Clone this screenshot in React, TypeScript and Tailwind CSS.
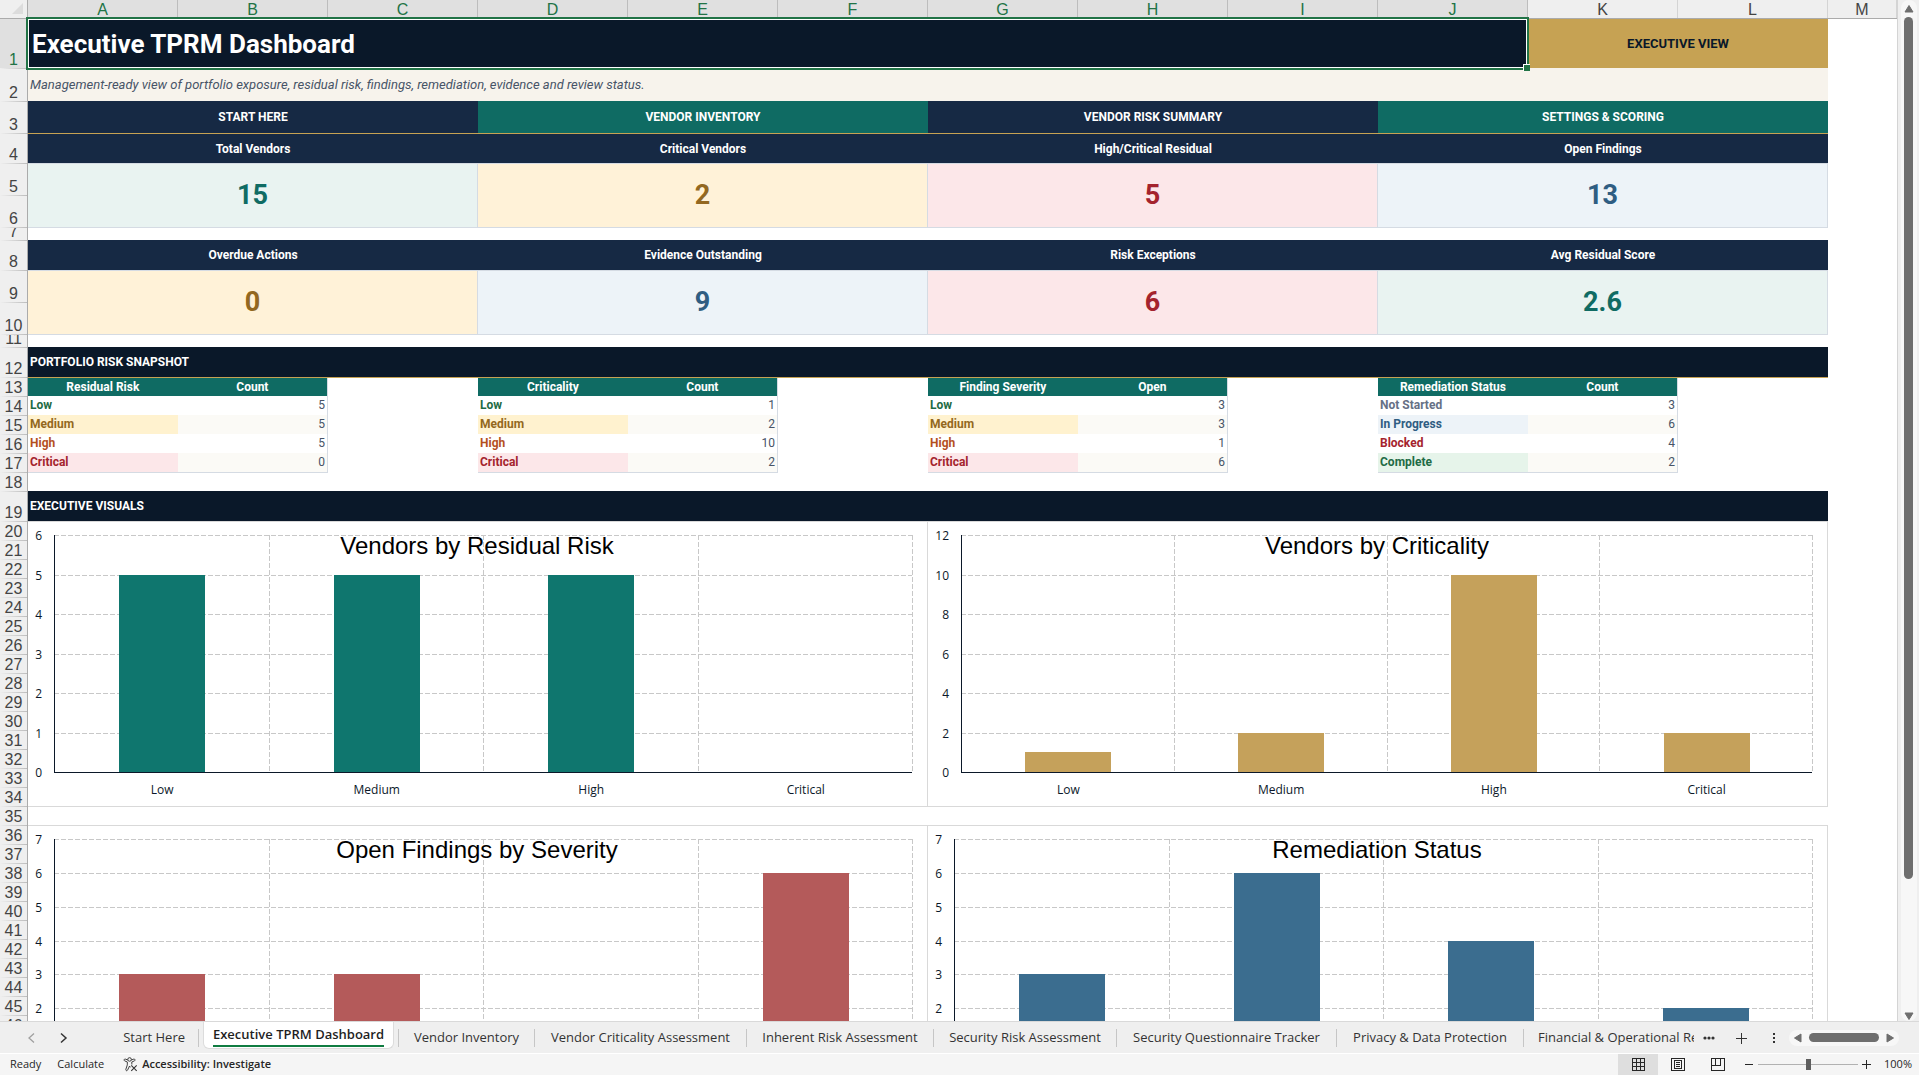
import type { ReactNode } from "react";

const COLUMNS = ["A", "B", "C", "D", "E", "F", "G", "H", "I", "J", "K", "L", "M"];

const ROW_HEIGHTS = [50, 33, 32, 30, 32, 32, 13, 30, 32, 32, 13, 30, 19, 19, 19, 19, 19, 19, 30];
const rowHeight = (index: number) => ROW_HEIGHTS[index] ?? 19;
const ROW_COUNT = 46;

type Tile = { label: string; value: string; className: string };

const TILES_TOP: Tile[] = [
  { label: "Total Vendors", value: "15", className: "bg-[#e9f3f1] text-[#0f6b63]" },
  { label: "Critical Vendors", value: "2", className: "bg-[#fff2d8] text-[#936820]" },
  { label: "High/Critical Residual", value: "5", className: "bg-[#fce7e9] text-[#a4232d]" },
  { label: "Open Findings", value: "13", className: "bg-[#edf3f8] text-[#2f5d82]" },
];

const TILES_BOTTOM: Tile[] = [
  { label: "Overdue Actions", value: "0", className: "bg-[#fff2d8] text-[#936820]" },
  { label: "Evidence Outstanding", value: "9", className: "bg-[#edf3f8] text-[#2f5d82]" },
  { label: "Risk Exceptions", value: "6", className: "bg-[#fce7e9] text-[#a4232d]" },
  { label: "Avg Residual Score", value: "2.6", className: "bg-[#e9f3f1] text-[#0f6b63]" },
];

const NAV = [
  { label: "START HERE", className: "bg-[#162944]" },
  { label: "VENDOR INVENTORY", className: "bg-[#0f6b63]" },
  { label: "VENDOR RISK SUMMARY", className: "bg-[#162944]" },
  { label: "SETTINGS & SCORING", className: "bg-[#0f6b63]" },
];

type Row = { name: string; value: number; className: string };
type Snapshot = { head: [string, string]; rows: Row[] };

const severityRows = (low: number, medium: number, high: number, critical: number): Row[] => [
  { name: "Low", value: low, className: "text-[#1f6b45]" },
  { name: "Medium", value: medium, className: "bg-[#fff2cf] text-[#936820]" },
  { name: "High", value: high, className: "text-[#b4501e]" },
  { name: "Critical", value: critical, className: "bg-[#fce7e9] text-[#a4232d]" },
];

const SNAPSHOTS: Snapshot[] = [
  { head: ["Residual Risk", "Count"], rows: severityRows(5, 5, 5, 0) },
  { head: ["Criticality", "Count"], rows: severityRows(1, 2, 10, 2) },
  { head: ["Finding Severity", "Open"], rows: severityRows(3, 3, 1, 6) },
  {
    head: ["Remediation Status", "Count"],
    rows: [
      { name: "Not Started", value: 3, className: "text-[#667085]" },
      { name: "In Progress", value: 6, className: "bg-[#edf3f8] text-[#2f5d82]" },
      { name: "Blocked", value: 4, className: "text-[#a4232d]" },
      { name: "Complete", value: 2, className: "bg-[#e6f4ea] text-[#1f6b45]" },
    ],
  },
];

type ChartSpec = {
  title: string;
  color: string;
  max: number;
  step: number;
  axisX: number;
  data: [string, number][];
};

const CHARTS: ChartSpec[] = [
  { title: "Vendors by Residual Risk", color: "#0f766e", max: 6, step: 1, axisX: 26, data: [["Low", 5], ["Medium", 5], ["High", 5], ["Critical", 0]] },
  { title: "Vendors by Criticality", color: "#c5a15b", max: 12, step: 2, axisX: 33, data: [["Low", 1], ["Medium", 2], ["High", 10], ["Critical", 2]] },
  { title: "Open Findings by Severity", color: "#b45a5a", max: 7, step: 1, axisX: 26, data: [["Low", 3], ["Medium", 3], ["High", 1], ["Critical", 6]] },
  { title: "Remediation Status", color: "#3b6d8f", max: 7, step: 1, axisX: 26, data: [["Not Started", 3], ["In Progress", 6], ["Blocked", 4], ["Complete", 2]] },
];

const TABS = [
  { label: "Start Here", width: "w-[91px]" },
  { label: "Executive TPRM Dashboard", width: "w-[191px]", active: true },
  { label: "Vendor Inventory", width: "w-[136px]" },
  { label: "Vendor Criticality Assessment", width: "w-[212px]" },
  { label: "Inherent Risk Assessment", width: "w-[187px]" },
  { label: "Security Risk Assessment", width: "w-[183px]" },
  { label: "Security Questionnaire Tracker", width: "w-[220px]" },
  { label: "Privacy & Data Protection", width: "w-[187px]" },
  { label: "Financial & Operational Resilience", width: "w-[260px]" },
];

function BarChart({ title, color, max, step, axisX, data }: ChartSpec) {
  const top = 13;
  const base = 250;
  const right = 884;
  const band = (right - axisX) / data.length;
  const barWidth = 86;
  const y = (v: number) => Math.round(base - ((base - top) * v) / max);
  const ticks = Array.from({ length: max / step + 1 }, (_, i) => i * step);
  return (
    <svg viewBox="0 0 900 285" role="img" aria-label={title} className="block w-full font-['Open_Sans',sans-serif]">
      <g stroke="#c8c8c8" strokeDasharray="5 2" shapeRendering="crispEdges">
        {ticks.slice(1).map((t) => (
          <line key={t} x1={axisX} x2={right} y1={y(t) + 0.5} y2={y(t) + 0.5} />
        ))}
        {data.map(([name], i) => {
          const x = Math.round(axisX + band * (i + 1)) + 0.5;
          return <line key={name} x1={x} x2={x} y1={top} y2={base} />;
        })}
      </g>
      <g fill={color} shapeRendering="crispEdges">
        {data.map(([name, v], i) => (
          <rect key={name} x={Math.ceil(axisX + band * (i + 0.5) - barWidth / 2 + 0.5)} y={y(v)} width={barWidth} height={base - y(v)} />
        ))}
      </g>
      <g stroke="#0b1829" shapeRendering="crispEdges">
        <line x1={axisX + 0.5} x2={axisX + 0.5} y1={top} y2={base + 1} />
        <line x1={axisX} x2={right} y1={base + 0.5} y2={base + 0.5} />
      </g>
      <g fill="#0b1829" fontSize={12}>
        {ticks.map((t) => (
          <text key={t} x={axisX - 12} y={y(t) + 5} textAnchor="end">
            {t}
          </text>
        ))}
        {data.map(([name], i) => (
          <text key={name} x={axisX + band * (i + 0.5) + 1} y={272} textAnchor="middle">
            {name}
          </text>
        ))}
      </g>
      <text x={449} y={32} textAnchor="middle" fontSize={24} className="font-['Liberation_Sans',sans-serif]">
        {title}
      </text>
      <path d="M0 284.5H899.5V0" fill="none" stroke="#d9d9d9" shapeRendering="crispEdges" />
    </svg>
  );
}

function ChartRow({ charts }: { charts: ChartSpec[] }) {
  return (
    <div className="grid grid-cols-2">
      {charts.map((c) => (
        <BarChart key={c.title} {...c} />
      ))}
    </div>
  );
}

function TileBlock({ tiles, headClass }: { tiles: Tile[]; headClass: string }) {
  return (
    <div className="grid grid-cols-4">
      {tiles.map((t) => (
        <div key={t.label} className="font-bold">
          <div className={`flex items-center justify-center border-b border-[#d5dbe3] bg-[#162944] text-white ${headClass}`}>{t.label}</div>
          <div className={`flex h-16 items-center justify-center border-r border-b border-[#d5dbe3] text-[27px] ${t.className}`}>{t.value}</div>
        </div>
      ))}
    </div>
  );
}

function SectionBar({ children, lineClass }: { children: ReactNode; lineClass: string }) {
  return <h2 className={`flex h-[31px] items-center border-b bg-[#0a1829] pl-[2px] font-bold text-white ${lineClass}`}>{children}</h2>;
}

function SnapshotTable({ head, rows }: Snapshot) {
  return (
    <table className="w-2/3 table-fixed border-collapse border-r border-b border-[#d5dbe3]">
      <thead>
        <tr className="h-[18px] bg-[#0f6b63] text-white">
          {head.map((h) => (
            <th key={h} scope="col" className="p-0 leading-[18px]">
              {h}
            </th>
          ))}
        </tr>
      </thead>
      <tbody>
        {rows.map((r) => (
          <tr key={r.name} className="h-[19px] leading-[19px] even:bg-[#fbfaf6]">
            <th scope="row" className={`py-0 pr-0 pl-[2px] text-left ${r.className}`}>
              {r.name}
            </th>
            <td className="py-0 pr-[2px] pl-0 text-right text-[#475467]">{r.value}</td>
          </tr>
        ))}
      </tbody>
    </table>
  );
}

function ColumnHeaders() {
  return (
    <div className="flex h-[19px] shrink-0 border-b border-[#ababab] font-['Liberation_Sans',sans-serif] text-base">
      <div className="flex w-7 items-end justify-end border-r border-[#ababab] bg-[#efefef] pr-1 pb-1">
        <svg viewBox="0 0 11 11" className="size-[11px]" aria-hidden="true">
          <path d="M11 0V11H0Z" fill="#dcdcdc" />
        </svg>
      </div>
      <div className="grid flex-1 grid-cols-[repeat(12,150fr)_69fr]">
        {COLUMNS.map((c, i) => (
          <div
            key={c}
            className={
              i < 10
                ? "flex items-end justify-center border-r border-[#bdbdbd] bg-[#e0e0e0] leading-4 text-[#217346]"
                : "flex items-end justify-center border-r border-[#d4d4d4] bg-[#efefef] leading-4 text-[#444444]"
            }
          >
            {c}
          </div>
        ))}
      </div>
    </div>
  );
}

function RowHeaders() {
  return (
    <div className="w-7 shrink-0 border-r border-[#ababab] bg-[#efefef] font-['Liberation_Sans',sans-serif] text-base text-[#444444]">
      {Array.from({ length: ROW_COUNT }, (_, i) => (
        <div key={i} className={`flex flex-col ${i === 0 ? "bg-[#e0e0e0] text-[#217346]" : ""}`} style={{ height: rowHeight(i) }}>
          <div className="flex min-h-0 flex-1 items-end justify-center overflow-hidden leading-4">{i + 1}</div>
          <div className="h-px shrink-0 bg-linear-to-r from-[#efefef] to-[#bdbdbd]" />
        </div>
      ))}
    </div>
  );
}

function Sheet() {
  return (
    <div className="relative flex min-w-0 flex-1 flex-col overflow-hidden border-r border-[#d4d4d4] bg-white">
      <ColumnHeaders />
      <div className="flex min-h-0 flex-1">
        <RowHeaders />
        <div className="grid min-w-0 flex-1 grid-cols-[1800fr_69fr] items-start">
          <main className="font-['Roboto',sans-serif] text-xs">
            <div className="grid h-[49px] grid-cols-[1500fr_300fr]">
              <div className="relative flex items-center bg-[#0a1829] pt-[2px] pl-1 text-[26px] font-bold text-white">
                <h1>Executive TPRM Dashboard</h1>
                <div className="absolute -top-[2px] -right-px -bottom-[2px] -left-[2px] border-2 border-[#217346]">
                  <div className="size-full border border-white" />
                  <div className="absolute -right-[3px] -bottom-[3px] size-[7px] border-t border-l border-white bg-[#217346]" />
                </div>
              </div>
              <div className="flex items-center justify-center bg-[#c6a253] text-[13px] font-bold text-[#0a1829]">EXECUTIVE VIEW</div>
            </div>
            <p className="flex h-[33px] items-center bg-[#f7f3ec] pl-[2px] text-[13px] text-[#475467] italic">
              Management-ready view of portfolio exposure, residual risk, findings, remediation, evidence and review status.
            </p>
            <nav className="grid h-[33px] grid-cols-4 border-b border-[#c6a253] font-bold text-white">
              {NAV.map((n) => (
                <a key={n.label} href="#" className={`flex items-center justify-center ${n.className}`}>
                  {n.label}
                </a>
              ))}
            </nav>
            <TileBlock tiles={TILES_TOP} headClass="h-[30px]" />
            <div className="h-3" />
            <TileBlock tiles={TILES_BOTTOM} headClass="h-[31px]" />
            <div className="h-3" />
            <SectionBar lineClass="border-[#c6a253]">PORTFOLIO RISK SNAPSHOT</SectionBar>
            <div className="grid grid-cols-4 pb-[18px]">
              {SNAPSHOTS.map((s) => (
                <SnapshotTable key={s.head[0]} {...s} />
              ))}
            </div>
            <SectionBar lineClass="border-[#d9d9d9]">EXECUTIVE VISUALS</SectionBar>
            <ChartRow charts={CHARTS.slice(0, 2)} />
            <div className="h-[19px] border-b border-[#d9d9d9]" />
            <ChartRow charts={CHARTS.slice(2)} />
          </main>
        </div>
      </div>
    </div>
  );
}

function Triangle({ d, label }: { d: string; label: string }) {
  return (
    <button type="button" aria-label={label} className="shrink-0">
      <svg viewBox="0 0 10 10" className="size-[10px]" aria-hidden="true">
        <path d={d} fill="#6e6e6e" stroke="#6e6e6e" strokeLinejoin="round" />
      </svg>
    </button>
  );
}

function VerticalScroll() {
  return (
    <div className="flex w-[21px] shrink-0 justify-center bg-[#efefef]">
      <div className="flex w-4 flex-col items-center rounded-lg bg-[#f7f7f7] pt-1">
        <Triangle label="Scroll up" d="M5 1.5L9 8H1Z" />
        <div className="mt-[3px] flex min-h-0 w-[9px] flex-1 flex-col">
          <div className="flex-[861] rounded-full bg-[#6e6e6e]" />
          <div className="flex-[132]" />
        </div>
        <Triangle label="Scroll down" d="M1 2H9L5 8.5Z" />
      </div>
    </div>
  );
}

function TabBar() {
  return (
    <div className="flex h-8 shrink-0 items-stretch border-t border-[#d9d9d9] bg-[#efefef] font-['Open_Sans',sans-serif] text-[13px] text-[#333333]">
      <div className="flex w-[108px] shrink-0 items-center gap-[23px] pl-[26px]">
        <button type="button" aria-label="Previous sheet">
          <svg viewBox="0 0 10 12" className="h-3 w-[10px]" fill="none" stroke="#a0a0a0" aria-hidden="true">
            <path d="M8 1.5L3 6L8 10.5" strokeWidth="1.3" />
          </svg>
        </button>
        <button type="button" aria-label="Next sheet">
          <svg viewBox="0 0 10 12" className="h-3 w-[10px]" fill="none" stroke="#333333" aria-hidden="true">
            <path d="M2 1.5L7 6L2 10.5" strokeWidth="1.5" />
          </svg>
        </button>
      </div>
      <div role="tablist" className="flex w-[1586px] min-w-0 shrink items-stretch overflow-hidden whitespace-nowrap">
        {TABS.map((t, i) =>
          t.active ? (
            <button
              key={t.label}
              type="button"
              role="tab"
              aria-selected="true"
              className={`mx-1 mb-1 flex shrink-0 items-start justify-center rounded-b-md border-x border-b border-[#dcdcdc] bg-white pt-[2px] font-semibold text-[#1f1f1f] ${t.width}`}
            >
              <span className="border-b-2 border-[#107c41] leading-[21px]">{t.label}</span>
            </button>
          ) : (
            <button key={t.label} type="button" role="tab" aria-selected="false" className={`flex shrink-0 items-center ${t.width}`}>
              {i > 1 && <span className="h-[18px] w-px bg-[#c6c6c6]" />}
              <span className={i === 0 ? "flex-1 pr-[13px] text-right" : i === 8 ? "flex-1 pl-[14px] text-left" : "flex-1 text-center"}>
                {t.label}
              </span>
              {i === 0 && <span className="h-[18px] w-px bg-[#c6c6c6]" />}
            </button>
          ),
        )}
      </div>
      <div className="ml-auto flex shrink-0 items-center">
        <button type="button" aria-label="More sheets">
          <svg viewBox="0 0 12 4" className="h-1 w-3" fill="#333333" aria-hidden="true">
            <circle cx="2" cy="2" r="1.6" />
            <circle cx="6" cy="2" r="1.6" />
            <circle cx="10" cy="2" r="1.6" />
          </svg>
        </button>
        <button type="button" aria-label="New sheet" className="ml-5">
          <svg viewBox="0 0 12 12" className="size-3" stroke="#333333" aria-hidden="true">
            <path d="M6.5 0.5V11.5M0.5 6.5H11.5" shapeRendering="crispEdges" />
          </svg>
        </button>
        <button type="button" aria-label="Tab options" className="ml-[25px]">
          <svg viewBox="0 0 4 12" className="h-3 w-1" fill="#333333" aria-hidden="true">
            <path d="M0.5 0.5h2v2h-2zM0.5 4.5h2v2h-2zM0.5 8.5h2v2h-2z" transform="translate(0.5 0.5)" />
          </svg>
        </button>
        <div className="mr-5 ml-[13px] flex h-4 w-[110px] items-center justify-between rounded-full bg-[#f7f7f7] px-1">
          <Triangle label="Scroll left" d="M8 1L1.5 5L8 9Z" />
          <div className="h-[9px] w-[70px] rounded-full bg-[#6e6e6e]" />
          <Triangle label="Scroll right" d="M2 1L8.5 5L2 9Z" />
        </div>
      </div>
    </div>
  );
}

function StatusBar() {
  return (
    <footer className="flex h-[22px] shrink-0 items-stretch border-t border-white bg-[#f5f5f5] font-['Open_Sans',sans-serif] text-[11px] text-[#262626]">
      <div className="flex items-center pl-[10px]">
        <span>Ready</span>
        <span className="ml-4">Calculate</span>
        <button type="button" className="ml-[19px] flex items-center gap-1 font-semibold">
          <svg viewBox="0 0 16 16" className="size-[15px]" fill="none" stroke="#333333" aria-hidden="true">
            <circle cx="7" cy="2.6" r="1.9" />
            <path d="M5.2 3.2L2.4 2.2C1.2 1.9 0.7 3.6 1.7 4.1L4.6 5.3V8.4L3 13.2C2.8 14.8 4.4 15.1 4.9 13.9L7 9.6L7.8 11" />
            <path d="M8.8 3.2L11.6 2.2C12.8 1.9 13.3 3.6 12.3 4.1L9.4 5.3V8" />
            <path d="M8.8 9L14.6 14.8M14.6 9L8.8 14.8" strokeWidth="1.2" />
          </svg>
          Accessibility: Investigate
        </button>
      </div>
      <div className="ml-auto flex items-stretch">
        <button type="button" aria-label="Normal view" aria-pressed="true" className="flex w-10 items-center justify-center bg-[#dedede]">
          <svg viewBox="0 0 13 13" className="size-[13px]" fill="none" stroke="#262626" shapeRendering="crispEdges" aria-hidden="true">
            <path d="M0.5 0.5H12.5V12.5H0.5ZM4.5 0V13M8.5 0V13M0 4.5H13M0 8.5H13" />
          </svg>
        </button>
        <button type="button" aria-label="Page layout view" className="flex w-10 items-center justify-center">
          <svg viewBox="0 0 14 13" className="h-[13px] w-[14px]" fill="none" stroke="#262626" shapeRendering="crispEdges" aria-hidden="true">
            <path d="M0.5 0.5H13.5V12.5H0.5ZM3.5 2.5H10.5V10.5H3.5ZM5 4.5H9M5 6.5H9M5 8.5H9" />
          </svg>
        </button>
        <button type="button" aria-label="Page break preview" className="flex w-10 items-center justify-center">
          <svg viewBox="0 0 14 13" className="h-[13px] w-[14px]" fill="none" stroke="#262626" shapeRendering="crispEdges" aria-hidden="true">
            <path d="M0.5 0.5H13.5V12.5H0.5ZM4.5 0V7.5M9.5 0V7.5M0 7.5H9.5" />
          </svg>
        </button>
        <button type="button" aria-label="Zoom out" className="flex w-4 items-center justify-end">
          <svg viewBox="0 0 9 9" className="size-[9px]" stroke="#262626" shapeRendering="crispEdges" aria-hidden="true">
            <path d="M0 4.5H8" />
          </svg>
        </button>
        <input
          type="range"
          aria-label="Zoom"
          min={0}
          max={100}
          defaultValue={50}
          className="mx-1 my-auto h-[11px] w-[100px] appearance-none bg-linear-to-b from-transparent from-[5px] via-[#6e6e6e] via-[5px] to-transparent to-[6px] [&::-webkit-slider-thumb]:h-[11px] [&::-webkit-slider-thumb]:w-[5px] [&::-webkit-slider-thumb]:appearance-none [&::-webkit-slider-thumb]:bg-[#5e5e5e]"
        />
        <button type="button" aria-label="Zoom in" className="flex items-center">
          <svg viewBox="0 0 9 9" className="size-[9px]" stroke="#262626" shapeRendering="crispEdges" aria-hidden="true">
            <path d="M0 4.5H9M4.5 0V9" />
          </svg>
        </button>
        <span className="flex w-12 items-center justify-end pr-[7px]">100%</span>
      </div>
    </footer>
  );
}

export default function App() {
  return (
    <div className="flex h-screen flex-col overflow-hidden bg-[#efefef]">
      <div className="flex min-h-0 flex-1">
        <Sheet />
        <VerticalScroll />
      </div>
      <TabBar />
      <StatusBar />
    </div>
  );
}
